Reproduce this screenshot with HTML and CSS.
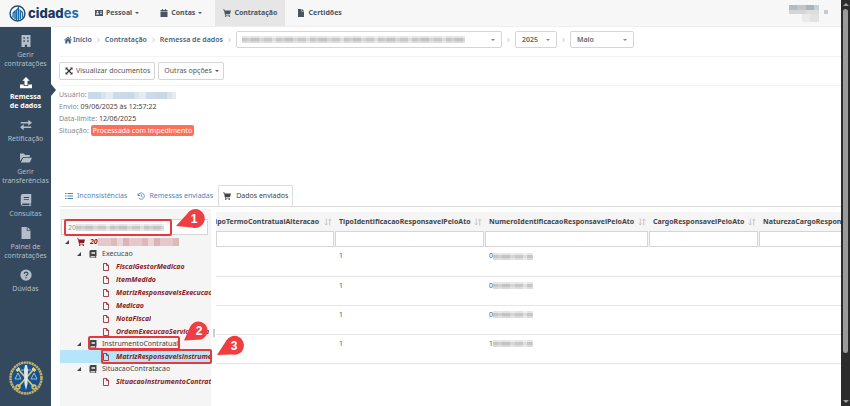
FILE: index.html
```html
<!DOCTYPE html>
<html lang="pt-BR">
<head>
    <meta charset="UTF-8">
    <title>CidadES - Remessa de dados</title>
    <link rel="stylesheet" href="styles.css">
</head>
<body>

<!-- shared icons -->
<svg class="sprite" aria-hidden="true">
    <symbol id="cart" viewBox="0 0 16 16"><path d="M0 1h3l.6 2H16l-2 7H5.400l.3 1.400H14V13H4.200L2 2.600H0z"/><circle cx="5.500" cy="14.500" r="1.500"/><circle cx="12.500" cy="14.500" r="1.500"/></symbol>
    <symbol id="file" viewBox="0 0 16 16"><path d="M2 0h7v5h5v11H2zM10 0l4 4h-4z"/></symbol>
    <symbol id="file-o" viewBox="0 0 16 16"><path d="M3 1h6.500L13 4.500V15H3zM9 1v4h4" fill="none" stroke="currentColor" stroke-width="1.600"/></symbol>
    <symbol id="book" viewBox="0 0 16 16"><path fill-rule="evenodd" d="M4 0h11v12.500h-1V15h1v1H4a3 3 0 0 1-3-3V3a3 3 0 0 1 3-3zM5 4v1.300h7V4zM5 6.500v1.300h7V6.500zM4 12.500a1.200 1.200 0 0 0 0 2.500h8.500v-2.500z"/></symbol>
    <symbol id="sort" viewBox="0 0 16 16"><path d="M4.500 1v13M1.500 11l3 3 3-3M11.500 15V2M8.500 5l3-3 3 3" fill="none" stroke="currentColor" stroke-width="1.600"/></symbol>
    <symbol id="chevron" viewBox="0 0 8 8"><path d="M2 .5 5.500 4 2 7.500" fill="none" stroke="currentColor"/></symbol>
</svg>

<div class="app">
    <header class="topbar">
        <a class="logo" href="#" aria-label="CidadES">
            <svg viewBox="0 0 18 18">
                <circle cx="9" cy="9" r="7.900" fill="#fff" stroke="#1d4a78" stroke-width="1.500"/>
                <path d="M4.300 13.500V8.500l2-2v8.500M8 16V5.500l2-2.500v13M12 15V6l2.300 2v5.500" fill="none" stroke="#1f6da8" stroke-width="1.500"/>
            </svg>
            <span>cidad<b>es</b></span>
        </a>
        <nav class="menu">
            <a href="#"><svg viewBox="0 0 16 16"><path fill-rule="evenodd" d="M0 2h16v12H0zM2 11h6c0-2-1-3-3-3s-3 1-3 3zM5 4a1.700 1.700 0 1 0 0 3.400A1.700 1.700 0 0 0 5 4zM10 5v1.300h4V5zM10 8v1.300h4V8z"/></svg>Pessoal<i class="caret"></i></a>
            <a href="#"><svg viewBox="0 0 16 16"><path d="M4 0h2v2h4V0h2v2h3v3H1V2h3zM1 6h14v10H1z"/></svg>Contas<i class="caret"></i></a>
            <a href="#" class="current"><svg><use href="#cart"/></svg>Contratação</a>
            <a href="#"><svg><use href="#file"/></svg>Certidões</a>
        </nav>
        <div class="user">
            <span class="user-name"></span>
            <span class="user-dot"></span>
        </div>
    </header>

    <div class="body">
        <aside class="sidebar">
            <a href="#"><svg viewBox="0 0 16 16"><path fill-rule="evenodd" d="M2 0h12v16H9.500v-3h-3v3H2zM4.500 3v2h2V3zM9.500 3v2h2V3zM4.500 7v2h2V7zM9.500 7v2h2V7z"/></svg>Gerir<br>contratações</a>
            <a href="#" class="current"><svg viewBox="0 0 16 16"><path d="M8 0l5 5h-3v6H6V5H3zM0 10h5v2h6v-2h5v5H0z"/></svg>Remessa<br>de dados</a>
            <a href="#"><svg viewBox="0 0 16 16"><path d="M1 4h10V1l5 4-5 4V6H1zM15 12H5v3l-5-4 5-4v3h10z"/></svg>Retificação</a>
            <a href="#"><svg viewBox="0 0 16 16"><path d="M0 2h5l2 2h6v2.500H4L0 12zM4.500 7.500H16L13 14H1z"/></svg>Gerir<br>transferências</a>
            <a href="#"><svg><use href="#book"/></svg>Consultas</a>
            <a href="#"><svg><use href="#file"/></svg>Painel de<br>contratações</a>
            <a href="#"><svg viewBox="0 0 16 16"><circle cx="8" cy="8" r="7.500"/><path d="M5.700 6.500c0-3.300 4.800-3 4.800-.4C10.500 8 8 7.800 8 9.700M8 11v1.700" fill="none" stroke="#34495e" stroke-width="1.500"/></svg>Dúvidas</a>
            <svg class="seal" viewBox="0 0 36 36">
                <circle cx="18" cy="18" r="14" fill="#17528a"/>
                <circle cx="18" cy="18" r="15.500" fill="none" stroke="#bfae6c" stroke-width="2.600" stroke-dasharray="2.200 .5"/>
                <path d="M10 9l16 18M26 9L10 27" stroke="#dcc66f" stroke-width="1.800"/>
                <path d="M8.500 11l3-3M27.500 11l-3-3" stroke="#e8d88c" stroke-width="2.500"/>
                <circle cx="10" cy="27" r="2" fill="none" stroke="#dcc66f" stroke-width="1.300"/>
                <circle cx="26" cy="27" r="2" fill="none" stroke="#dcc66f" stroke-width="1.300"/>
                <path d="M13 10h10M10 13l-3 6h6zM26 13l-3 6h6z" fill="none" stroke="#9dbbd6"/>
                <path d="M17 5h2l1 5-.5 14L18 30l-1.500-6L16 10z" fill="#dce6ee"/>
            </svg>
        </aside>

        <main class="content">
            <div class="crumbs">
                <a href="#"><svg viewBox="0 0 16 16"><path d="M8 1l8 7-1 1-7-6-7 6-1-1zM8 4l5.500 5v6H9.500v-4h-3v4h-4V9zM12 1h2v4l-2-2z"/></svg>Início</a>
                <svg class="sep"><use href="#chevron"/></svg>
                <a href="#">Contratação</a>
                <svg class="sep"><use href="#chevron"/></svg>
                <a href="#">Remessa de dados</a>
                <svg class="sep"><use href="#chevron"/></svg>
                <div class="picker unit"><select aria-label="Unidade gestora"><option></option></select><span class="mosaic"></span></div>
                <svg class="sep"><use href="#chevron"/></svg>
                <div class="picker year"><select aria-label="Ano"><option>2025</option></select></div>
                <svg class="sep"><use href="#chevron"/></svg>
                <div class="picker month"><select aria-label="Mês"><option>Maio</option></select></div>
            </div>

            <div class="actions">
                <button type="button"><svg viewBox="0 0 16 16"><path d="M1 1h5L1 6zM15 1v5l-5-5zM1 15v-5l5 5zM15 15h-5l5-5z"/><path d="M3 3l10 10M13 3L3 13" stroke="currentColor" stroke-width="2.500"/></svg>Visualizar documentos</button>
                <button type="button">Outras opções<i class="caret"></i></button>
            </div>

            <div class="info">
                <div>Usuário: <span class="mosaic blue"></span></div>
                <div>Envio: <b>09/06/2025 às 12:57:22</b></div>
                <div>Data-limite: <b>12/06/2025</b></div>
                <div>Situação: <span class="status">Processada com impedimento</span></div>
            </div>

            <nav class="tabs">
                <a href="#"><svg viewBox="0 0 16 16"><path d="M0 2h3v2H0zM5 2h11v2H5zM0 7h3v2H0zM5 7h11v2H5zM0 12h3v2H0zM5 12h11v2H5z"/></svg>Inconsistências</a>
                <a href="#"><svg viewBox="0 0 16 16"><path d="M2 3v4h4M2.500 6.500A6.200 6.200 0 1 1 4 12.500M8.500 4.500v4l2.500 1.500" fill="none" stroke="currentColor" stroke-width="1.700"/></svg>Remessas enviadas</a>
                <a href="#" class="current"><svg><use href="#cart"/></svg>Dados enviados</a>
            </nav>

            <div class="split">
                <section class="panel">
                    <div class="search">
                        <input type="text" value="20" aria-label="Pesquisar">
                        <span class="mosaic"></span>
                        <span class="mark mark-search"></span>
                        <svg class="pin pin-1" viewBox="0 0 30 20"><path d="M1 17L12 5A9.500 9.500 0 1 1 17 18.500z"/><text x="19" y="14">1</text></svg>
                    </div>
                    <ul class="tree">
                        <li class="node root"><i class="arrow"></i><svg><use href="#cart"/></svg><span>20</span><span class="mosaic pink"></span></li>
                        <li class="node"><i class="arrow"></i><svg><use href="#book"/></svg><span>Execucao</span></li>
                        <li class="leaf"><svg><use href="#file-o"/></svg><span>FiscalGestorMedicao</span></li>
                        <li class="leaf"><svg><use href="#file-o"/></svg><span>ItemMedido</span></li>
                        <li class="leaf"><svg><use href="#file-o"/></svg><span>MatrizResponsaveisExecucao</span></li>
                        <li class="leaf"><svg><use href="#file-o"/></svg><span>Medicao</span></li>
                        <li class="leaf"><svg><use href="#file-o"/></svg><span>NotaFiscal</span></li>
                        <li class="leaf"><svg><use href="#file-o"/></svg><span>OrdemExecucaoServicoObra</span></li>
                        <li class="node"><i class="arrow"></i><svg><use href="#book"/></svg><span>InstrumentoContratual</span>
                            <i class="mark mark-node"></i>
                            <svg class="pin pin-2" viewBox="0 0 30 20"><path d="M4 19.500L10 6A9.200 9.200 0 1 1 17 18.700z"/><text x="19" y="14">2</text></svg>
                        </li>
                        <li class="leaf selected"><svg><use href="#file-o"/></svg><span>MatrizResponsaveisInstrumento</span>
                            <i class="mark mark-leaf"></i>
                            <svg class="pin pin-3" viewBox="0 0 30 20"><path d="M2 19L11 5A9.500 9.500 0 1 1 17 18.500z"/><text x="19" y="14">3</text></svg>
                        </li>
                        <li class="node"><i class="arrow"></i><svg><use href="#book"/></svg><span>SituacaoContratacao</span></li>
                        <li class="leaf"><svg><use href="#file-o"/></svg><span>SituacaoInstrumentoContratual</span></li>
                    </ul>
                </section>
                <div class="splitter"></div>
                <div class="grid">
                    <table>
                        <colgroup><col class="c1"><col class="c2"><col class="c3"><col class="c4"><col class="c5"></colgroup>
                        <thead>
                            <tr>
                                <th class="cut"><div>TipoTermoContratualAlteracao<svg><use href="#sort"/></svg></div></th>
                                <th><div>TipoIdentificacaoResponsavelPeloAto<svg><use href="#sort"/></svg></div></th>
                                <th><div>NumeroIdentificacaoResponsavelPeloAto<svg><use href="#sort"/></svg></div></th>
                                <th><div>CargoResponsavelPeloAto<svg><use href="#sort"/></svg></div></th>
                                <th><div>NaturezaCargoResponsavelPeloAto</div></th>
                            </tr>
                            <tr class="filters">
                                <td><input type="text" aria-label="Filtrar TipoTermoContratualAlteracao"></td>
                                <td><input type="text" aria-label="Filtrar TipoIdentificacaoResponsavelPeloAto"></td>
                                <td><input type="text" aria-label="Filtrar NumeroIdentificacaoResponsavelPeloAto"></td>
                                <td><input type="text" aria-label="Filtrar CargoResponsavelPeloAto"></td>
                                <td><input type="text" aria-label="Filtrar NaturezaCargoResponsavelPeloAto"></td>
                            </tr>
                        </thead>
                        <tbody>
                            <tr><td></td><td>1</td><td>0<span class="mosaic"></span></td><td></td><td></td></tr>
                            <tr><td></td><td>1</td><td>0<span class="mosaic"></span></td><td></td><td></td></tr>
                            <tr><td></td><td>1</td><td>0<span class="mosaic"></span></td><td></td><td></td></tr>
                            <tr><td></td><td>1</td><td>1<span class="mosaic"></span></td><td></td><td></td></tr>
                        </tbody>
                    </table>
                </div>
            </div>
        </main>
    </div>
</div>

<div class="scrollbar">
    <i class="up"></i>
    <div class="thumb"></div>
    <i class="down"></i>
</div>

</body>
</html>
```

FILE: styles.css
```css
* {
    box-sizing: border-box;
}
body {
    margin: 0;
    display: flex;
    height: 100vh;
    overflow: hidden;
    font-family: "Noto Sans", "Open Sans", sans-serif;
    font-size: 7px;
    line-height: 12px;
    color: #555;
    background: #fff;
}
a {
    color: inherit;
    text-decoration: none;
}
svg {
    width: 8px;
    height: 8px;
    flex: none;
    fill: currentColor;
}
.sprite {
    position: absolute;
    width: 0;
    height: 0;
}
input, select, button {
    font: inherit;
    color: inherit;
    background: #fff;
    border: 1px solid #d5d5d5;
    border-radius: 0;
    outline: none;
}
.app {
    flex: 1;
    min-width: 0;
    display: flex;
    flex-direction: column;
}
.caret {
    border: 2px solid transparent;
    border-top-color: currentColor;
    border-bottom: 0;
    margin-left: 3px;
}

/* blurred-out data */
.mosaic {
    display: inline-block;
    height: 7px;
    background:
        linear-gradient(rgba(255,255,255,.55) 0 2px, transparent 2px 5px, rgba(255,255,255,.35) 5px),
        repeating-linear-gradient(90deg, #c6c6c6 0 5px, #cfcfcf 5px 9px, #c2c3c5 9px 17px, #d6d5d3 17px 22px, #c8c8c8 22px 30px, #dedede 30px 34px);
}
.mosaic.blue {
    width: 88px;
    vertical-align: middle;
    background: repeating-linear-gradient(90deg, #c9d9e8 0 13px, #d7e3ee 13px 18px, #e4ebf1 18px 25px, #cddbe8 25px 33px);
}
.mosaic.pink {
    flex: 1;
    max-width: 81px;
    height: 8px;
    background: repeating-linear-gradient(90deg, #e5c9ca 0 13px, #dfb8ba 13px 19px, #ead5d5 19px 25px, #ddb4b6 25px 31px);
}

/* top bar */
.topbar {
    display: flex;
    height: 27px;
    background: #f7f7f7;
    border-bottom: 1px solid #eee;
}
.logo {
    display: flex;
    align-items: center;
    gap: 2px;
    width: 87px;
    padding-left: 9px;
    font-family: Inter, sans-serif;
    font-size: 13px;
    font-weight: 800;
    color: #173a5e;
}
.logo svg {
    width: 17px;
    height: 17px;
}
.logo b {
    font-weight: 700;
    color: #1f6da8;
}
.menu {
    display: flex;
    flex: 1;
    font-weight: 700;
    color: #4a5560;
}
.menu a {
    display: flex;
    align-items: center;
    padding: 0 13px 0 8px;
}
.menu svg {
    margin-right: 3px;
}
.menu .current {
    padding-right: 8px;
    background: #e6e6e6;
}
.menu .current + a {
    padding-left: 12px;
}
.user {
    display: flex;
    gap: 5px;
    padding: 5px 13px 0 0;
}
.user-name {
    width: 30px;
    height: 17px;
    background:
        linear-gradient(90deg, #b4bcc1 0 8px, #c3c5c6 8px 17px, #a9b4ba 17px 25px, #c5d0d7 25px) 0 0 / 30px 5px no-repeat,
        linear-gradient(90deg, #d3d6d8 0 17px, #dcdddd 17px) 0 5px / 30px 4px no-repeat,
        linear-gradient(90deg, #ebebeb 0 8px, #e2e2e2 8px) 13px 9px / 17px 8px no-repeat;
}
.user-dot {
    width: 4px;
    height: 4px;
    margin-top: 5px;
    background: #c3c9cc;
}

/* sidebar */
.body {
    display: flex;
    flex: 1;
    min-height: 0;
}
.sidebar {
    display: flex;
    flex-direction: column;
    flex: none;
    width: 51px;
    padding-top: 1px;
    background: #34495e;
    color: #b3bec8;
    line-height: 9px;
    text-align: center;
}
.sidebar a {
    position: relative;
    padding: 7px 0 2px;
}
.sidebar a svg {
    display: block;
    width: 12px;
    height: 12px;
    margin: 0 auto 3px;
}
.sidebar .current {
    color: #fff;
    font-weight: 700;
}
.sidebar .current::after {
    content: "";
    position: absolute;
    left: 100%;
    top: 14px;
    border: 6px solid transparent;
    border-left: 5px solid #34495e;
    border-right: 0;
}
.sidebar .seal {
    width: 36px;
    height: 36px;
    margin: auto auto 10px 8px;
}

/* content */
.content {
    flex: 1;
    min-width: 0;
    display: flex;
    flex-direction: column;
}
.crumbs {
    display: flex;
    align-items: center;
    gap: 4px;
    margin-left: 9px;
    padding: 4px 0 8px 4px;
    border-bottom: 1px solid #f3f3f3;
    font-weight: 600;
    color: #44617c;
}
.crumbs a {
    display: flex;
    align-items: center;
    gap: 1px;
}
.crumbs .sep {
    width: 5px;
    height: 6px;
    color: #aaa;
}
.picker {
    position: relative;
    color: #666;
}
.picker select {
    display: block;
    appearance: none;
    width: 100%;
    height: 17px;
    padding: 0 6px;
    border-radius: 2px;
    font-weight: 600;
}
.picker::after {
    content: "";
    position: absolute;
    right: 7px;
    top: 8px;
    border: 2px solid transparent;
    border-top-color: #888;
    border-bottom: 0;
}
.picker .mosaic {
    position: absolute;
    left: 6px;
    top: 5px;
    width: 223px;
}
.unit {
    width: 266px;
}
.year {
    width: 42px;
}
.month {
    width: 64px;
}
.actions {
    display: flex;
    gap: 3px;
    margin-left: 8px;
    padding: 5px 0;
    border-bottom: 1px solid #f3f3f3;
}
.actions button {
    display: flex;
    align-items: center;
    height: 18px;
    padding: 0 4px 0 5px;
    border-radius: 2px;
}
.actions svg {
    margin-right: 3px;
    color: #333;
}
.info {
    margin-left: 8px;
    padding-top: 3px;
    color: #888;
}
.info b {
    font-weight: 400;
    color: #444;
}
.status {
    display: inline-block;
    height: 11px;
    padding: 0 2px;
    border-radius: 2px;
    line-height: 11px;
    background: #ff6f5a;
    color: #fff;
}
.tabs {
    display: flex;
    margin: 48px 0 0 9px;
    border-bottom: 1px solid #ddd;
    color: #4c86b8;
}
.tabs a {
    display: flex;
    align-items: center;
    gap: 4px;
    height: 21px;
    padding: 0 4px;
    border: 1px solid transparent;
    border-bottom: 0;
}
.tabs .current {
    gap: 5px;
    margin-bottom: -1px;
    border-color: #ddd;
    border-radius: 2px 2px 0 0;
    background: #fff;
    color: #444;
}

/* tree and table */
.split {
    display: flex;
    flex: 1;
    min-height: 0;
    margin-left: 9px;
}
.panel {
    flex: none;
    width: 151px;
    margin-top: 2px;
    background: #f5f5f5;
}
.search {
    position: relative;
    padding: 10px 3px 1px 1px;
}
.search input {
    display: block;
    width: 100%;
    height: 16px;
    padding: 0 6px;
    color: #888;
}
.search .mosaic {
    position: absolute;
    left: 16px;
    top: 15px;
    width: 88px;
}
.tree {
    margin: 0;
    padding: 0;
    list-style: none;
}
.tree li {
    position: relative;
    display: flex;
    align-items: center;
    white-space: nowrap;
}
.tree span {
    overflow: hidden;
}
.node {
    height: 12px;
    padding-left: 17px;
    color: #444;
}
.node svg {
    margin: 0 5px 0 8px;
}
.leaf {
    height: 13px;
    padding-left: 42px;
    font-family: "Open Sans", "Noto Sans", sans-serif;
    font-weight: 700;
    font-style: italic;
    color: #8b1a22;
}
.leaf svg {
    margin-right: 6px;
}
.root {
    padding-left: 5px;
    font-weight: 700;
    font-style: italic;
    color: #8b1a22;
}
.arrow {
    border-left: 4px solid transparent;
    border-bottom: 4px solid #444;
}
.selected {
    background: #b5e5fb;
}
.mark {
    position: absolute;
    border: 2px solid #e8383d;
    border-radius: 2px;
}
.mark-search {
    left: 4px;
    top: 10px;
    width: 108px;
    height: 17px;
}
.mark-node {
    left: 28px;
    top: -2px;
    width: 92px;
    height: 14px;
}
.mark-leaf {
    left: 41px;
    top: -1px;
    right: -1px;
    height: 15px;
}
.tree .pin, .pin {
    position: absolute;
    width: 30px;
    height: 20px;
    margin: 0;
    overflow: visible;
    fill: #ef3e42;
    z-index: 2;
}
.pin text {
    fill: #fff;
    font: 700 12px "Liberation Sans", sans-serif;
    text-anchor: middle;
}
.pin-1 {
    left: 115px;
    top: 0;
}
.tree .pin-2 {
    left: 120px;
    top: -17px;
}
.tree .pin-3 {
    left: 155px;
    top: -14px;
}
.splitter {
    flex: none;
    width: 5px;
    padding: 122px 1px 0 2px;
}
.splitter::before {
    content: "";
    display: block;
    height: 8px;
    background: #ccc;
}
.grid {
    flex: 1;
    min-width: 0;
    overflow: hidden;
    padding-top: 5px;
}
table {
    width: 725px;
    table-layout: fixed;
    border-collapse: collapse;
}
.c1 { width: 119px; }
.c2 { width: 150px; }
.c3 { width: 164px; }
.c4 { width: 110px; }
th {
    height: 19px;
    padding: 0 3px 0 4px;
    background: #f5f5f5;
    color: #444;
    text-align: left;
}
th div {
    display: flex;
    align-items: center;
    justify-content: space-between;
    white-space: nowrap;
}
th svg {
    color: #bbb;
}
.cut {
    overflow: hidden;
    padding-left: 0;
}
.cut div {
    margin-left: -5px;
}
td {
    height: 29px;
    padding: 3px 4px;
    border-bottom: 1px solid #e6e6e6;
    vertical-align: top;
}
td .mosaic {
    width: 40px;
    vertical-align: middle;
}
.filters td {
    height: 16px;
    padding: 0 1px 0 0;
    border: 0;
    background: #f5f5f5;
}
.filters input {
    display: block;
    width: 100%;
    height: 16px;
}

/* window scrollbar */
.scrollbar {
    flex: none;
    display: flex;
    flex-direction: column;
    align-items: center;
    width: 9px;
    padding: 3px 0;
    background: #2c2c2c;
}
.scrollbar .up, .scrollbar .down {
    border: 3px solid transparent;
}
.scrollbar .up {
    border-top: 0;
    border-bottom-color: #9f9f9f;
}
.scrollbar .down {
    margin-top: auto;
    border-bottom: 0;
    border-top-color: #9f9f9f;
}
.thumb {
    width: 5px;
    height: 86%;
    margin-top: 3px;
    border-radius: 3px;
    background: #9b9b9b;
}
```
